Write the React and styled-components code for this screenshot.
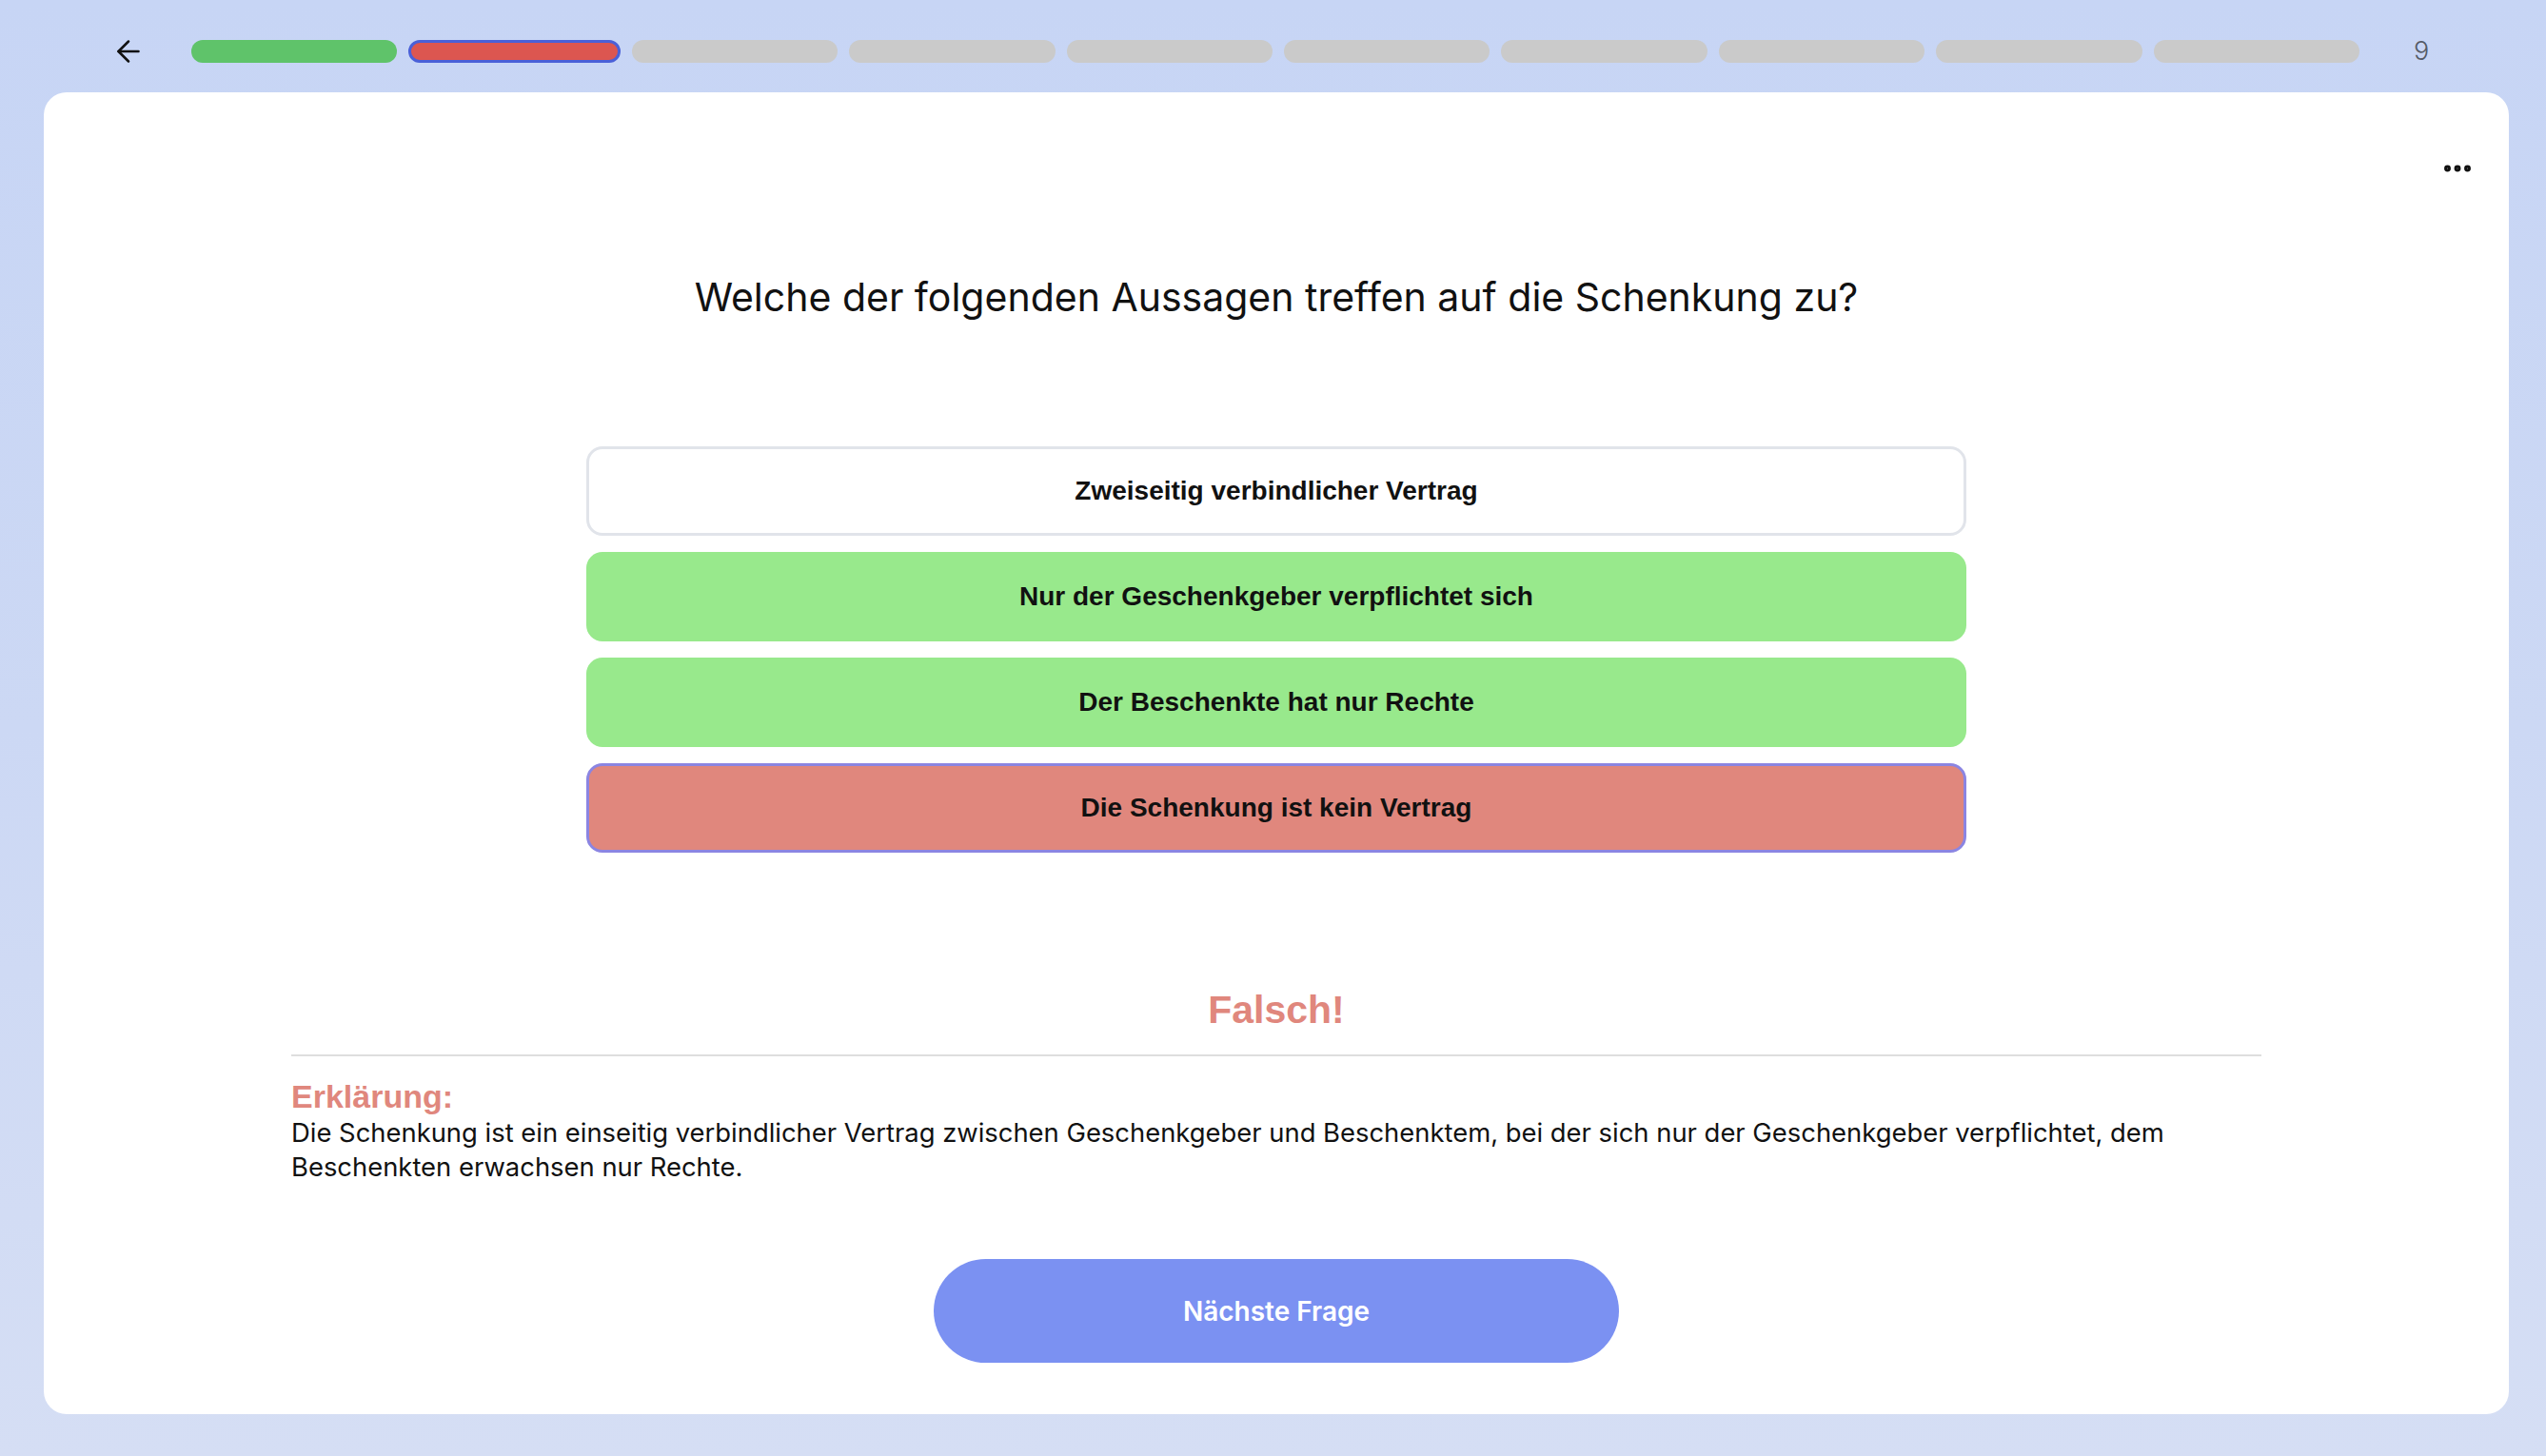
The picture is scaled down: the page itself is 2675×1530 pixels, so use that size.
import React from 'react';
import styled, { createGlobalStyle } from 'styled-components';
import { ArrowLeft, Ellipsis } from 'lucide-react';

const GlobalStyle = createGlobalStyle`
html, body {
    margin:0;
    padding:0;
}
body {
    background: linear-gradient(180deg, #c7d5f5 0%, #ccd8f4 50%, #d5def4 100%);
    font-family: "Inter", "Noto Sans", sans-serif;
}
`;

const Page = styled.div`
display:flex;
flex-direction:column;
height:1530px;
padding:0 39px 44px 46px;
box-sizing:border-box;
`;

const Header = styled.div`
display:flex;
align-items:center;
height:97px;
padding:10px 0 0 71px;
box-sizing:border-box;
flex:none;
`;

const BackButton = styled.button`
display:flex;
justify-content:center;
align-items:center;
width:36px;
height:36px;
padding:0;
border:none;
background:none;
color:#111;
cursor:pointer;
`;

const Bars = styled.div`
display:flex;
gap:12px;
flex:1;
margin-left:48px;
`;

const Bar = styled.div`
flex:1;
height:24px;
border-radius:12px;
box-sizing:border-box;
background-color:${props => props.color};
border:${props => props.active ? '3px solid #4a60d8' : 'none'};
`;

const Count = styled.div`
margin-left:57px;
margin-right:84px;
width:16px;
font-family:"Inter", sans-serif;
font-weight:300;
font-size:27px;
color:#555b66;
`;

const Card = styled.div`
flex:1;
display:flex;
flex-direction:column;
align-items:center;
background-color:#fff;
border-radius:24px;
`;

const TopBar = styled.div`
align-self:stretch;
display:flex;
justify-content:flex-end;
padding:62px 36px 0 0;
height:36px;
`;

const Question = styled.h1`
margin:92px 0 0 0;
font-family:"Inter", sans-serif;
font-weight:400;
font-size:41px;
line-height:50px;
color:#111;
`;

const Options = styled.div`
display:flex;
flex-direction:column;
gap:17px;
width:1450px;
margin-top:132px;
`;

const Option = styled.button`
display:flex;
justify-content:center;
align-items:center;
height:94px;
border-radius:17px;
box-sizing:border-box;
font-family:"Liberation Sans", Arial, sans-serif;
font-weight:700;
font-size:28px;
color:#111;
background-color:${props => props.state === 'correct' ? '#98e98c' : props.state === 'wrong' ? '#e0877d' : '#fff'};
border:${props => props.state === 'wrong' ? '3px solid #8b85e2' : props.state === 'correct' ? 'none' : '3px solid #e1e4ea'};
cursor:pointer;
`;

const Result = styled.div`
margin-top:141px;
font-family:"Liberation Sans", Arial, sans-serif;
font-weight:700;
font-size:41px;
line-height:48px;
color:#e0877d;
`;

const Divider = styled.hr`
width:2070px;
margin:23px 0 0 0;
border:none;
border-top:2px solid #dedede;
`;

const Explanation = styled.div`
width:2070px;
margin-top:22px;
`;

const ExplanationTitle = styled.div`
font-family:"Liberation Sans", Arial, sans-serif;
font-weight:700;
font-size:34px;
line-height:40px;
color:#e0877d;
`;

const ExplanationText = styled.p`
margin:0;
font-family:"Inter", sans-serif;
font-weight:400;
font-size:27.4px;
line-height:36px;
color:#111;
`;

const NextButton = styled.button`
display:flex;
justify-content:center;
align-items:center;
width:720px;
height:109px;
margin-top:79px;
border:none;
border-radius:55px;
background-color:#7b91f2;
font-family:"Inter", sans-serif;
font-weight:600;
font-size:28px;
color:#fff;
cursor:pointer;
`;

const progress = ['done', 'current', 'open', 'open', 'open', 'open', 'open', 'open', 'open', 'open'];
const barColor = { done: '#5fc36a', current: '#dc5650', open: '#cacaca' };

const answers = [
    { text: 'Zweiseitig verbindlicher Vertrag', state: 'none' },
    { text: 'Nur der Geschenkgeber verpflichtet sich', state: 'correct' },
    { text: 'Der Beschenkte hat nur Rechte', state: 'correct' },
    { text: 'Die Schenkung ist kein Vertrag', state: 'wrong' },
];

const App = () => {
    return (
        <>
            <GlobalStyle />
            <Page>
                <Header>
                    <BackButton><ArrowLeft size={36} strokeWidth={1.7} /></BackButton>
                    <Bars>
                        {progress.map((p, i) => (
                            <Bar key={i} color={barColor[p]} active={p === 'current'} />
                        ))}
                    </Bars>
                    <Count>9</Count>
                </Header>
                <Card>
                    <TopBar>
                        <Ellipsis size={36} strokeWidth={2.6} color="#111" />
                    </TopBar>
                    <Question>Welche der folgenden Aussagen treffen auf die Schenkung zu?</Question>
                    <Options>
                        {answers.map((a) => (
                            <Option key={a.text} state={a.state}>{a.text}</Option>
                        ))}
                    </Options>
                    <Result>Falsch!</Result>
                    <Divider />
                    <Explanation>
                        <ExplanationTitle>Erklärung:</ExplanationTitle>
                        <ExplanationText>
                            Die Schenkung ist ein einseitig verbindlicher Vertrag zwischen Geschenkgeber und Beschenktem, bei der sich nur der Geschenkgeber verpflichtet, dem Beschenkten erwachsen nur Rechte.
                        </ExplanationText>
                    </Explanation>
                    <NextButton>Nächste Frage</NextButton>
                </Card>
            </Page>
        </>
    );
};

export default App;
